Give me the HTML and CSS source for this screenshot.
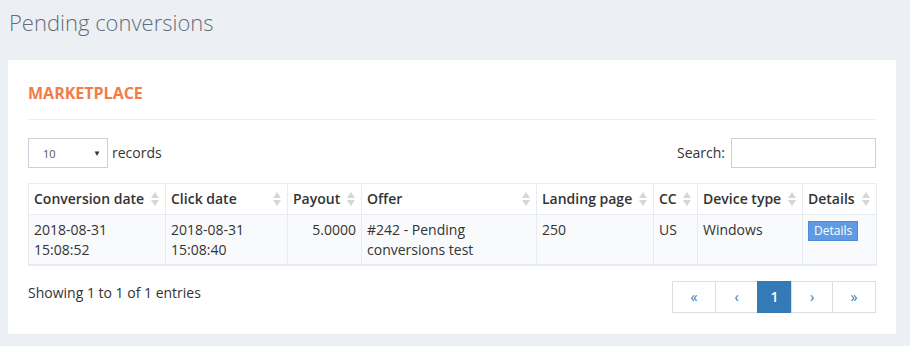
FILE: index.html
```html
<html>
   <head>
      <title>Pending conversions</title>
      <link rel="stylesheet" href="styles.css">
   </head>
   <body>
      <h1 class="page-title">Pending conversions</h1>
      <div class="box">
         <div class="box-header">MARKETPLACE</div>
         <div class="box-body">
            <div class="dt-top">
               <label class="dt-length">
                  <span class="select">10<span class="caret">&#9660;</span></span>
                  records
               </label>
               <label class="dt-search">Search: <input type="text" /></label>
            </div>
            <table class="dt">
               <colgroup>
                  <col class="c-conv" />
                  <col class="c-click" />
                  <col class="c-pay" />
                  <col class="c-offer" />
                  <col class="c-land" />
                  <col class="c-cc" />
                  <col class="c-dev" />
                  <col class="c-det" />
               </colgroup>
               <thead>
                  <tr>
                     <th>Conversion date</th>
                     <th>Click date</th>
                     <th>Payout</th>
                     <th>Offer</th>
                     <th>Landing page</th>
                     <th>CC</th>
                     <th>Device type</th>
                     <th>Details</th>
                  </tr>
               </thead>
               <tbody>
                  <tr>
                     <td>2018-08-31<br />15:08:52</td>
                     <td>2018-08-31<br />15:08:40</td>
                     <td class="num">5.0000</td>
                     <td>#242 - Pending conversions test</td>
                     <td>250</td>
                     <td>US</td>
                     <td>Windows</td>
                     <td><button class="btn-details">Details</button></td>
                  </tr>
               </tbody>
            </table>
            <div class="dt-bottom">
               <div class="dt-info">Showing 1 to 1 of 1 entries</div>
               <ul class="pager">
                  <li>&laquo;</li>
                  <li>&lsaquo;</li>
                  <li class="active">1</li>
                  <li>&rsaquo;</li>
                  <li>&raquo;</li>
               </ul>
            </div>
         </div>
      </div>
   </body>
</html>
```

FILE: styles.css
```css
html {
   margin: 0px;
   padding: 0px;
}

body {
   margin: 0px;
   background-color: #ecf0f5;
   font-family: "Open Sans", Arial, sans-serif;
   font-size: 14px;
   line-height: 20px;
   color: #333;
}

.page-title {
   margin: 0px;
   padding: 7px 0px 0px 9px;
   height: 60px;
   box-sizing: border-box;
   font-size: 22px;
   line-height: 30px;
   font-weight: 300;
   color: #646d78;
}

.box {
   background: white;
   margin: 0px 14px 0px 8px;
   padding: 0px 20px 21px 20px;
}

.box-header {
   color: #f47b47;
   font-weight: 700;
   font-size: 16px;
   line-height: normal;
   padding: 22px 0px 15px 0px;
   border-bottom: 1px solid #eceef1;
}

.dt-top {
   display: flex;
   justify-content: space-between;
   align-items: center;
   margin-top: 18px;
   margin-bottom: 15px;
}

.dt-length {
   display: flex;
   align-items: center;
}

.select {
   display: inline-flex;
   justify-content: space-between;
   align-items: center;
   box-sizing: border-box;
   width: 80px;
   height: 30px;
   border: 1px solid #c9d0da;
   padding: 2px 6px 0px 14px;
   font-size: 11px;
   color: #555;
   margin-right: 4px;
}

.caret {
   font-size: 8px;
   color: #333;
   padding-bottom: 3px;
}

.dt-search {
   display: flex;
   align-items: center;
}

.dt-search input {
   width: 145px;
   height: 30px;
   box-sizing: border-box;
   border: 1px solid #c9d0da;
   margin-left: 6px;
}

table.dt {
   width: 848px;
   border-collapse: collapse;
   table-layout: fixed;
   border-bottom: 2px solid #e8ecf1;
   font-size: 14px;
   line-height: 20px;
   color: #333;
}

.c-conv { width: 137px; }
.c-click { width: 122px; }
.c-pay { width: 74px; }
.c-offer { width: 175px; }
.c-land { width: 117px; }
.c-cc { width: 44px; }
.c-dev { width: 105px; }
.c-det { width: 74px; }

.dt th,
.dt td {
   border: 1px solid #e8ecf1;
   padding: 5px 5px;
   text-align: left;
   vertical-align: top;
}

.dt th {
   font-weight: 600;
   position: relative;
   background: white;
   white-space: nowrap;
}

/* sort arrows */
.dt th:before,
.dt th:after {
   content: "";
   position: absolute;
   right: 6px;
   width: 0px;
   height: 0px;
   border-left: 4px solid transparent;
   border-right: 4px solid transparent;
}

.dt th:before {
   top: 8px;
   border-bottom: 6px solid #d6d6d6;
}

.dt th:after {
   top: 16px;
   border-top: 6px solid #d6d6d6;
}

.dt td {
   background: #f9fafc;
   padding-bottom: 4px;
}

.dt td.num {
   text-align: right;
}

.btn-details {
   font-family: "Open Sans", Arial, sans-serif;
   font-size: 12px;
   line-height: 18px;
   color: white;
   background: #5e9be4;
   border: 1px solid #4e8bd8;
   padding: 0px 5px;
   margin: 1px 0px 0px 0px;
   width: 50px;
   display: block;
}

.dt-bottom {
   display: flex;
   justify-content: space-between;
   align-items: flex-start;
   margin-top: 15px;
}

.dt-info {
   margin-top: 2px;
}

.pager {
   display: flex;
   list-style: none;
   margin: 0px;
   padding: 0px;
}

.pager li {
   box-sizing: border-box;
   height: 32px;
   border: 1px solid #ddd;
   margin-left: -1px;
   display: flex;
   align-items: center;
   justify-content: center;
   color: #337ab7;
   font-size: 14px;
}

.pager li:nth-child(1) { width: 44px; margin-left: 0px; }
.pager li:nth-child(2) { width: 43px; }
.pager li:nth-child(3) { width: 35px; }
.pager li:nth-child(4) { width: 42px; }
.pager li:nth-child(5) { width: 44px; }

.pager li.active {
   background: #337ab7;
   border-color: #337ab7;
   color: white;
   font-weight: 600;
}
```
